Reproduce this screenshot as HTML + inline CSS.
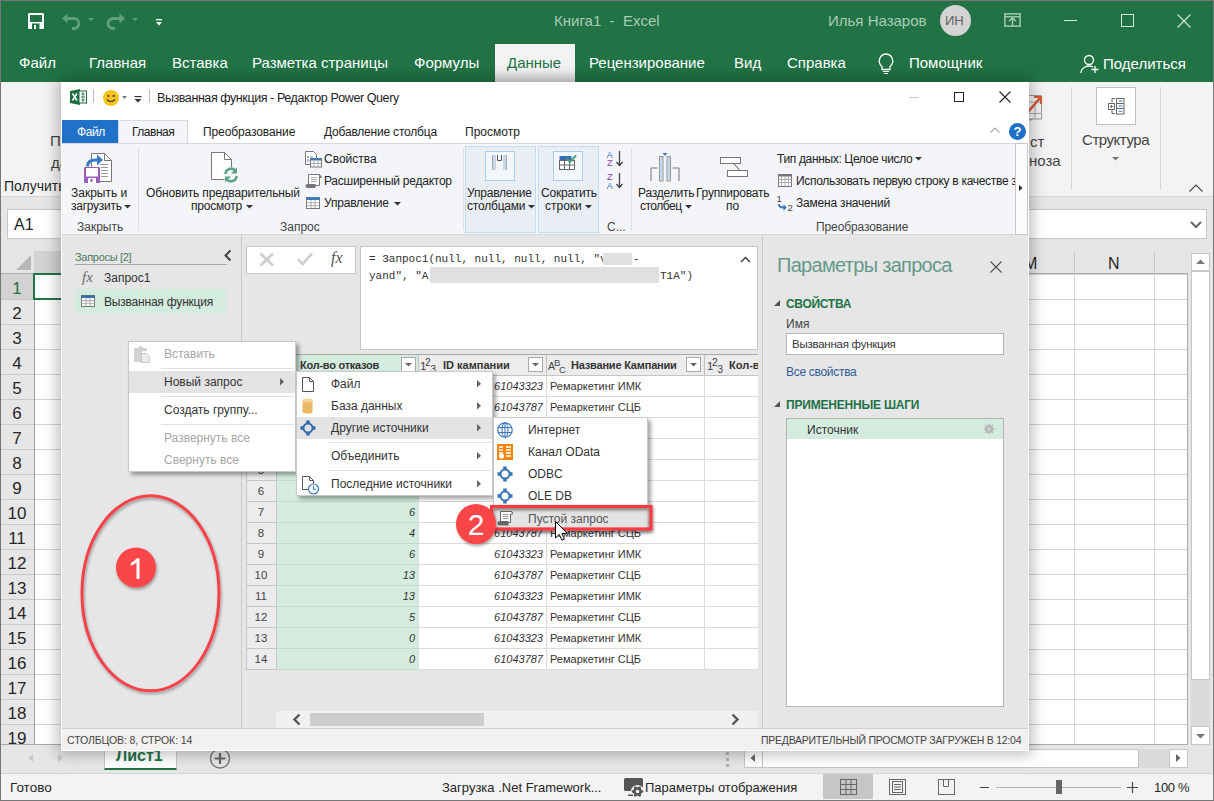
<!DOCTYPE html>
<html><head><meta charset="utf-8">
<style>
*{margin:0;padding:0;box-sizing:border-box}
html,body{width:1214px;height:801px;overflow:hidden;background:#fff}
body{position:relative;font-family:"Liberation Sans",sans-serif;color:#262626}
.a{position:absolute}
.t{position:absolute;white-space:nowrap;line-height:1}
svg{position:absolute;overflow:visible}
</style></head><body>

<!-- ============ EXCEL BACKGROUND ============ -->
<div class="a" style="left:0;top:0;width:1214px;height:82px;background:#217346"></div>
<!-- QAT -->
<svg style="left:28px;top:13px" width="17" height="17" viewBox="0 0 17 17"><rect x="0" y="0" width="16" height="16" rx="1.2" fill="#fff"/><rect x="2" y="2" width="12" height="7" fill="#217346"/><rect x="4" y="10.5" width="7.5" height="5.5" fill="#217346"/><rect x="6" y="12" width="2" height="4" fill="#fff"/></svg>
<svg style="left:62px;top:13px" width="20" height="17" viewBox="0 0 20 17"><path d="M4 5.5h8a5 5 0 0 1 0 10h-2" fill="none" stroke="#5f9f7c" stroke-width="2.8"/><path d="M0 5.5l5.5-5v10z" fill="#5f9f7c"/></svg>
<svg style="left:88px;top:18px" width="7" height="4"><path d="M0 0h6l-3 3z" fill="#5f9f7c"/></svg>
<svg style="left:105px;top:13px" width="20" height="17" viewBox="0 0 20 17"><path d="M16 5.5h-8a5 5 0 0 0 0 10h2" fill="none" stroke="#5f9f7c" stroke-width="2.8"/><path d="M20 5.5l-5.5-5v10z" fill="#5f9f7c"/></svg>
<svg style="left:132px;top:18px" width="7" height="4"><path d="M0 0h6l-3 3z" fill="#5f9f7c"/></svg>
<svg style="left:156px;top:19px" width="7" height="8"><rect x="0" y="0" width="6" height="1.3" fill="#fff"/><path d="M0 3h6l-3 3.5z" fill="#fff"/></svg>
<div class="t" style="left:554px;top:13px;font-size:15px;color:#a9cbb8">Книга1&nbsp; - &nbsp;Excel</div>
<div class="t" style="left:828px;top:13px;font-size:15px;color:#a9cbb8">Илья Назаров</div>
<div class="a" style="left:940px;top:5px;width:31px;height:31px;border-radius:50%;background:#d4d4d4"></div>
<div class="t" style="left:945px;top:14px;font-size:13px;color:#606060">ИН</div>
<svg style="left:1004px;top:13px" width="17" height="14" viewBox="0 0 17 14"><rect x="0.9" y="0.9" width="15.2" height="12.2" fill="none" stroke="#a6cdb5" stroke-width="1.5"/><path d="M1 3.8h15" stroke="#a6cdb5" stroke-width="1.4"/><path d="M8.5 13v-8.5M5 8.2l3.5-3.5 3.5 3.5" fill="none" stroke="#a6cdb5" stroke-width="1.4"/></svg>
<div class="a" style="left:1064px;top:20px;width:13px;height:1px;background:#d9e8df"></div>
<div class="a" style="left:1121px;top:14px;width:13px;height:13px;border:1px solid #d9e8df"></div>
<svg style="left:1177px;top:14px" width="14" height="14"><path d="M0.5 0.5l13 13M13.5 0.5l-13 13" stroke="#d9e8df" stroke-width="1.1"/></svg>

<!-- Tabs -->
<div class="t" style="left:19px;top:55px;font-size:15px;color:#fff">Файл</div>
<div class="t" style="left:89px;top:55px;font-size:15px;color:#fff">Главная</div>
<div class="t" style="left:172px;top:55px;font-size:15px;color:#fff">Вставка</div>
<div class="t" style="left:252px;top:55px;font-size:15px;color:#fff">Разметка страницы</div>
<div class="t" style="left:414px;top:55px;font-size:15px;color:#fff">Формулы</div>
<div class="a" style="left:495px;top:44px;width:80px;height:38px;background:linear-gradient(#f3f3f3 70%,#dcdcdc)"></div>
<div class="t" style="left:507px;top:55px;font-size:15px;color:#217346">Данные</div>
<div class="t" style="left:589px;top:55px;font-size:15px;color:#fff">Рецензирование</div>
<div class="t" style="left:734px;top:55px;font-size:15px;color:#fff">Вид</div>
<div class="t" style="left:787px;top:55px;font-size:15px;color:#fff">Справка</div>
<svg style="left:877px;top:53px" width="18" height="21" viewBox="0 0 18 21"><path d="M9 1a7 7 0 0 0-4 12.5v3h8v-3A7 7 0 0 0 9 1z" fill="none" stroke="#fff" stroke-width="1.3"/><path d="M6 18.5h6M7 20.5h4" stroke="#fff" stroke-width="1.2"/></svg>
<div class="t" style="left:909px;top:55px;font-size:15px;color:#fff">Помощник</div>
<svg style="left:1080px;top:54px" width="20" height="20" viewBox="0 0 20 20"><circle cx="9" cy="6" r="4.5" fill="none" stroke="#fff" stroke-width="1.3"/><path d="M1 19a8 7 0 0 1 12-6" fill="none" stroke="#fff" stroke-width="1.3"/><path d="M15 12v7M11.5 15.5h7" stroke="#fff" stroke-width="1.3"/></svg>
<div class="t" style="left:1103px;top:56px;font-size:15px;color:#fff">Поделиться</div>

<!-- Excel ribbon -->
<div class="a" style="left:0;top:82px;width:1214px;height:115px;background:#f3f3f3;border-bottom:1px solid #d5d5d5"></div>
<div class="t" style="left:50px;top:133px;font-size:15px;color:#444">П</div>
<div class="t" style="left:51px;top:155px;font-size:15px;color:#444">да</div>
<div class="t" style="left:4px;top:179px;font-size:14px;color:#262626">Получить</div>
<!-- right side of excel ribbon -->
<svg style="left:1028px;top:94px" width="16" height="30" viewBox="0 0 16 30"><path d="M-8 1.5h21.5v23.5h-21.5" fill="none" stroke="#999" stroke-width="1"/><path d="M-8 8h21.5M-8 19.5h21.5M7 8v17" stroke="#aaa" stroke-width="1"/><path d="M2 27l3-2h-4z" fill="#999"/><path d="M0 18l12-14" stroke="#d45a35" stroke-width="2.6"/><path d="M6 3h7v7" fill="none" stroke="#d45a35" stroke-width="2.2"/></svg>
<div class="t" style="left:1030px;top:134px;font-size:15px;color:#444">ст</div>
<div class="t" style="left:1029px;top:153px;font-size:15px;color:#444">ноза</div>
<div class="a" style="left:1071px;top:87px;width:1px;height:103px;background:#d4d4d4"></div>
<div class="a" style="left:1096px;top:87px;width:40px;height:38px;border:1px solid #c0c0c0;background:#fff"></div>
<svg style="left:1108px;top:98px" width="17" height="17" viewBox="0 0 17 17"><rect x="0.5" y="5.5" width="6" height="6" fill="none" stroke="#666"/><path d="M3.5 7v3M2 8.5h3" stroke="#666"/><path d="M7 0.5h-3v4M4 12v3.5h3" fill="none" stroke="#666"/><rect x="8.5" y="0.5" width="7.5" height="15.5" fill="none" stroke="#666"/><path d="M8.5 5.5h7.5M8.5 10.5h7.5" stroke="#666"/><path d="M10.5 3h4M10.5 8h4M10.5 13.2h4" stroke="#3f7fc0" stroke-width="1.1"/></svg>
<div class="t" style="left:1082px;top:132px;font-size:15px;color:#444;letter-spacing:-0.45px">Структура</div>
<svg style="left:1112px;top:157px" width="8" height="5"><path d="M0 0h7l-3.5 3.5z" fill="#777"/></svg>
<div class="a" style="left:1160px;top:87px;width:1px;height:103px;background:#d4d4d4"></div>
<svg style="left:1189px;top:184px" width="14" height="8"><path d="M0.5 7.5l6.5-6.5 6.5 6.5" fill="none" stroke="#444" stroke-width="1.1"/></svg>

<!-- formula bar -->
<div class="a" style="left:0;top:197px;width:1214px;height:54px;background:#e6e6e6"></div>
<div class="a" style="left:7px;top:209px;width:1200px;height:30px;background:#fff;border:1px solid #c6c6c6"></div>
<div class="t" style="left:14px;top:217px;font-size:16px;color:#262626">A1</div>
<svg style="left:1190px;top:221px" width="12" height="8"><path d="M1 1l5 5 5-5" fill="none" stroke="#666" stroke-width="2"/></svg>

<!-- grid -->
<div class="a" style="left:0;top:251px;width:1214px;height:550px;background:#e6e6e6"></div>
<div id="grid" class="a" style="left:34px;top:274px;width:1154px;height:470px;background-color:#fff;background-image:linear-gradient(#d4d4d4 1px,transparent 1px),linear-gradient(90deg,#d4d4d4 1px,transparent 1px);background-size:80px 25px,80px 25px;background-position:0 0,0 0;border-right:1px solid #ababab"></div>
<div class="a" style="left:0;top:273px;width:1188px;height:1px;background:#ababab"></div>
<div class="a" style="left:34px;top:251px;width:1px;height:493px;background:#9e9e9e"></div>
<div class="a" style="left:0;top:744px;width:1188px;height:1px;background:#ababab"></div>
<svg style="left:15px;top:255px" width="17" height="16"><path d="M16 0v15h-15z" fill="#b8b8b8"/></svg>
<div class="a" style="left:0;top:274px;width:34px;height:25px;background:#d2d2d2"></div>
<div class="a" style="left:34px;top:251px;width:80px;height:22px;background:#d2d2d2"></div>
<div class="a" style="left:0;top:299px;width:34px;height:1px;background:#c8c8c8"></div>
<div class="t" style="left:0;top:280px;width:34px;text-align:center;font-size:17px;color:#217346">1</div>
<div class="a" style="left:0;top:324px;width:34px;height:1px;background:#c8c8c8"></div>
<div class="t" style="left:0;top:305px;width:34px;text-align:center;font-size:17px;color:#262626">2</div>
<div class="a" style="left:0;top:349px;width:34px;height:1px;background:#c8c8c8"></div>
<div class="t" style="left:0;top:330px;width:34px;text-align:center;font-size:17px;color:#262626">3</div>
<div class="a" style="left:0;top:374px;width:34px;height:1px;background:#c8c8c8"></div>
<div class="t" style="left:0;top:355px;width:34px;text-align:center;font-size:17px;color:#262626">4</div>
<div class="a" style="left:0;top:399px;width:34px;height:1px;background:#c8c8c8"></div>
<div class="t" style="left:0;top:380px;width:34px;text-align:center;font-size:17px;color:#262626">5</div>
<div class="a" style="left:0;top:424px;width:34px;height:1px;background:#c8c8c8"></div>
<div class="t" style="left:0;top:405px;width:34px;text-align:center;font-size:17px;color:#262626">6</div>
<div class="a" style="left:0;top:449px;width:34px;height:1px;background:#c8c8c8"></div>
<div class="t" style="left:0;top:430px;width:34px;text-align:center;font-size:17px;color:#262626">7</div>
<div class="a" style="left:0;top:474px;width:34px;height:1px;background:#c8c8c8"></div>
<div class="t" style="left:0;top:455px;width:34px;text-align:center;font-size:17px;color:#262626">8</div>
<div class="a" style="left:0;top:499px;width:34px;height:1px;background:#c8c8c8"></div>
<div class="t" style="left:0;top:480px;width:34px;text-align:center;font-size:17px;color:#262626">9</div>
<div class="a" style="left:0;top:524px;width:34px;height:1px;background:#c8c8c8"></div>
<div class="t" style="left:0;top:505px;width:34px;text-align:center;font-size:17px;color:#262626">10</div>
<div class="a" style="left:0;top:549px;width:34px;height:1px;background:#c8c8c8"></div>
<div class="t" style="left:0;top:530px;width:34px;text-align:center;font-size:17px;color:#262626">11</div>
<div class="a" style="left:0;top:574px;width:34px;height:1px;background:#c8c8c8"></div>
<div class="t" style="left:0;top:555px;width:34px;text-align:center;font-size:17px;color:#262626">12</div>
<div class="a" style="left:0;top:599px;width:34px;height:1px;background:#c8c8c8"></div>
<div class="t" style="left:0;top:580px;width:34px;text-align:center;font-size:17px;color:#262626">13</div>
<div class="a" style="left:0;top:624px;width:34px;height:1px;background:#c8c8c8"></div>
<div class="t" style="left:0;top:605px;width:34px;text-align:center;font-size:17px;color:#262626">14</div>
<div class="a" style="left:0;top:649px;width:34px;height:1px;background:#c8c8c8"></div>
<div class="t" style="left:0;top:630px;width:34px;text-align:center;font-size:17px;color:#262626">15</div>
<div class="a" style="left:0;top:674px;width:34px;height:1px;background:#c8c8c8"></div>
<div class="t" style="left:0;top:655px;width:34px;text-align:center;font-size:17px;color:#262626">16</div>
<div class="a" style="left:0;top:699px;width:34px;height:1px;background:#c8c8c8"></div>
<div class="t" style="left:0;top:680px;width:34px;text-align:center;font-size:17px;color:#262626">17</div>
<div class="a" style="left:0;top:724px;width:34px;height:1px;background:#c8c8c8"></div>
<div class="t" style="left:0;top:705px;width:34px;text-align:center;font-size:17px;color:#262626">18</div>
<div class="a" style="left:0;top:749px;width:34px;height:1px;background:#c8c8c8"></div>
<div class="t" style="left:0;top:730px;width:34px;text-align:center;font-size:17px;color:#262626">19</div>
<div class="t" style="left:1024px;top:256px;font-size:16px;color:#262626">M</div>
<div class="t" style="left:1108px;top:256px;font-size:16px;color:#262626">N</div>
<div class="a" style="left:1074px;top:251px;width:1px;height:23px;background:#c6c6c6"></div>
<div class="a" style="left:1154px;top:251px;width:1px;height:23px;background:#c6c6c6"></div>
<div class="a" style="left:33px;top:273px;width:30px;height:27px;border:2px solid #217346"></div>
<!-- vertical scrollbar -->
<div class="a" style="left:1191px;top:253px;width:19px;height:492px;background:#dadada"></div>
<div class="a" style="left:1191px;top:253px;width:19px;height:18px;background:#fff;border:1px solid #c6c6c6"></div>
<svg style="left:1196px;top:259px" width="10" height="6"><path d="M0 5h9l-4.5-4.5z" fill="#777"/></svg>
<div class="a" style="left:1191px;top:271px;width:19px;height:409px;background:#fff;border:1px solid #c6c6c6"></div>
<div class="a" style="left:1191px;top:726px;width:19px;height:19px;background:#fff;border:1px solid #c6c6c6"></div>
<svg style="left:1196px;top:734px" width="10" height="6"><path d="M0 0h9l-4.5 4.5z" fill="#777"/></svg>

<!-- sheet tabs row -->
<div class="a" style="left:0;top:745px;width:1214px;height:28px;background:#e6e6e6"></div>
<svg style="left:28px;top:754px" width="6" height="9"><path d="M5 0v8l-4.5-4z" fill="#c6c6c6"/></svg>
<svg style="left:58px;top:754px" width="6" height="9"><path d="M0 0v8l4.5-4z" fill="#c6c6c6"/></svg>
<div class="a" style="left:104px;top:745px;width:73px;height:25px;background:#fff;border:1px solid #c6c6c6;border-top:none;border-bottom:2px solid #217346"></div>
<div class="t" style="left:116px;top:748px;font-size:16px;font-weight:bold;color:#217346">Лист1</div>
<svg style="left:209px;top:748px" width="22" height="22"><circle cx="11" cy="10.5" r="9.5" fill="none" stroke="#777" stroke-width="1.4"/><path d="M11 5v11M5.5 10.5h11" stroke="#666" stroke-width="2.2"/></svg>
<svg style="left:726px;top:752px" width="3" height="15"><rect x="0" y="0" width="3" height="3" fill="#b4b4b4"/><rect x="0" y="6" width="3" height="3" fill="#b4b4b4"/><rect x="0" y="12" width="3" height="3" fill="#b4b4b4"/></svg>
<div class="a" style="left:744px;top:749px;width:444px;height:19px;background:#dadada"></div>
<div class="a" style="left:744px;top:749px;width:19px;height:19px;background:#fff;border:1px solid #c6c6c6"></div>
<svg style="left:750px;top:754px" width="6" height="9"><path d="M5 0v8l-4.5-4z" fill="#666"/></svg>
<div class="a" style="left:762px;top:749px;width:377px;height:19px;background:#fff;border:1px solid #c6c6c6"></div>
<div class="a" style="left:1169px;top:749px;width:19px;height:19px;background:#fff;border:1px solid #c6c6c6"></div>
<svg style="left:1176px;top:754px" width="6" height="9"><path d="M0 0v8l4.5-4z" fill="#666"/></svg>

<!-- status bar -->
<div class="a" style="left:0;top:773px;width:1214px;height:28px;background:#f3f3f3;border-top:1px solid #d5d5d5"></div>
<div class="t" style="left:10px;top:781px;font-size:13.5px;color:#262626">Готово</div>
<div class="t" style="left:442px;top:781px;font-size:13px;color:#262626">Загрузка .Net Framework...</div>
<svg style="left:624px;top:778px" width="20" height="20" viewBox="0 0 20 20"><rect x="0" y="0" width="19" height="13" rx="1.5" fill="#555"/><circle cx="13.5" cy="13.5" r="6.6" fill="#f3f3f3"/><rect x="4" y="16.5" width="5" height="1.5" fill="#555"/><path d="M19.25 12.75 L19.25 14.26 L17.47 15.15 L16.91 16.12 L17.03 18.10 L15.71 18.86 L14.06 17.76 L12.93 17.76 L11.28 18.86 L9.97 18.10 L10.09 16.11 L9.53 15.14 L7.75 14.25 L7.75 12.74 L9.53 11.85 L10.09 10.88 L9.97 8.90 L11.29 8.14 L12.94 9.24 L14.07 9.24 L15.72 8.14 L17.03 8.90 L16.91 10.89 L17.47 11.86z" fill="#555"/><circle cx="13.5" cy="13.5" r="1.8" fill="#f3f3f3"/></svg>
<div class="t" style="left:645px;top:781px;font-size:13px;color:#262626">Параметры отображения</div>
<div class="a" style="left:823px;top:774px;width:50px;height:25px;background:#c6c6c6"></div>
<svg style="left:840px;top:779px" width="17" height="16"><rect x="0.5" y="0.5" width="16" height="15" fill="none" stroke="#666"/><path d="M6 0.5v15M11 0.5v15M0.5 5.5h16M0.5 10.5h16" stroke="#666"/></svg>
<svg style="left:889px;top:779px" width="17" height="16"><rect x="0.5" y="0.5" width="16" height="15" fill="none" stroke="#666"/><rect x="3.5" y="2.5" width="10" height="11" fill="none" stroke="#666"/><path d="M5 5.5h7M5 8h7M5 10.5h7" stroke="#666"/></svg>
<svg style="left:938px;top:779px" width="17" height="16"><rect x="0.5" y="0.5" width="16" height="15" fill="none" stroke="#666"/><path d="M5.5 0.5v7h5v-7" fill="none" stroke="#666"/></svg>
<div class="a" style="left:980px;top:787px;width:9px;height:1px;background:#444"></div>
<div class="a" style="left:996px;top:787px;width:125px;height:1px;background:#b4b4b4"></div>
<div class="a" style="left:1056px;top:780px;width:6px;height:14px;background:#666"></div>
<svg style="left:1127px;top:782px" width="11" height="11"><path d="M5.5 0v11M0 5.5h11" stroke="#444" stroke-width="1.2"/></svg>
<div class="t" style="left:1154px;top:781px;font-size:13px;color:#262626;letter-spacing:-0.3px">100 %</div>
<div class="a" style="left:0;top:0;width:1214px;height:801px;border:1px solid #767676;pointer-events:none;z-index:50"></div>

<!-- ============ POWER QUERY WINDOW ============ -->
<div id="pq" class="a" style="left:61px;top:82px;width:968px;height:669px;background:#e6e6e6;border:1px solid #fff;box-shadow:0 0 14px 3px rgba(0,0,0,0.28)"></div>
<!-- PQ title bar -->
<div class="a" style="left:61px;top:82px;width:968px;height:61px;background:#fff"></div>
<svg style="left:70px;top:89px" width="17" height="16" viewBox="0 0 17 16"><path d="M0 2l10-2v16l-10-2z" fill="#1d6f42"/><rect x="9" y="2" width="7.5" height="12" fill="#fff" stroke="#1d6f42" stroke-width="1"/><path d="M11 5h4M11 8h4M11 11h4M13 3v10" stroke="#1d6f42" stroke-width="0.8"/><path d="M2.5 4.5l4.5 7M7 4.5l-4.5 7" stroke="#fff" stroke-width="1.5"/></svg>
<div class="a" style="left:93px;top:89px;width:1px;height:14px;background:#bdbdbd"></div>
<svg style="left:103px;top:90px" width="17" height="17" viewBox="0 0 17 17"><circle cx="8" cy="8" r="8" fill="#f7c31a"/><circle cx="5.3" cy="6" r="1.1" fill="#333"/><circle cx="10.7" cy="6" r="1.1" fill="#333"/><path d="M4 9.5q4 4 8 0" fill="none" stroke="#333" stroke-width="1.1"/></svg>
<svg style="left:122px;top:96px" width="5" height="3"><path d="M0 0h5l-2.5 3z" fill="#777"/></svg>
<svg style="left:134px;top:96px" width="8" height="7"><rect x="0.5" y="0" width="7" height="1.2" fill="#333"/><path d="M0.5 3h7l-3.5 3.5z" fill="#333"/></svg>
<div class="a" style="left:149px;top:89px;width:1px;height:14px;background:#bdbdbd"></div>
<div class="t" style="left:157px;top:92px;font-size:12.5px;letter-spacing:-0.42px;color:#222">Вызванная функция - Редактор Power Query</div>
<div class="a" style="left:909px;top:97px;width:10px;height:1px;background:#c8c8c8"></div>
<div class="a" style="left:954px;top:92px;width:10px;height:10px;border:1px solid #222"></div>
<svg style="left:999px;top:91px" width="12" height="12"><path d="M0.5 0.5l11 11M11.5 0.5l-11 11" stroke="#222" stroke-width="1.1"/></svg>
<!-- PQ tabs -->
<div class="a" style="left:62px;top:120px;width:56px;height:23px;background:#2072c8"></div>
<div class="t" style="left:77px;top:126px;font-size:12px;letter-spacing:-0.45px;color:#fff">Файл</div>
<div class="a" style="left:118px;top:120px;width:70px;height:24px;background:#f3f5f8;border:1px solid #d5d9de;border-bottom:none"></div>
<div class="t" style="left:132px;top:126px;font-size:12px;letter-spacing:-0.5px;color:#222">Главная</div>
<div class="t" style="left:203px;top:126px;font-size:12px;color:#222;letter-spacing:-0.1px">Преобразование</div>
<div class="t" style="left:324px;top:126px;font-size:12px;color:#222;letter-spacing:-0.2px">Добавление столбца</div>
<div class="t" style="left:465px;top:126px;font-size:12px;color:#222">Просмотр</div>
<svg style="left:990px;top:127px" width="10" height="6"><path d="M0.5 5.5l4.5-4.5 4.5 4.5" fill="none" stroke="#aaa" stroke-width="1.1"/></svg>
<div class="a" style="left:1009px;top:123px;width:17px;height:17px;border-radius:50%;background:#1e6fc6"></div>
<div class="t" style="left:1009px;top:125px;width:17px;text-align:center;font-size:13px;font-weight:bold;color:#fff">?</div>
<!-- PQ ribbon -->
<div class="a" style="left:62px;top:143px;width:966px;height:92px;background:#f3f5f8;border-top:1px solid #d5d9de;border-bottom:1px solid #d8d8d8"></div>
<!-- close & load -->
<svg style="left:84px;top:153px" width="28" height="30" viewBox="0 0 28 30"><path d="M7.5 0.5h13l7 7v21h-20z" fill="#fff" stroke="#777" stroke-width="1"/><path d="M20.5 0.5v7h7" fill="none" stroke="#777" stroke-width="1"/><path d="M16 11.5h8M17 14.5h7M17 17.5h7M17 20.5h7M17 23.5h7" stroke="#999" stroke-width="1"/><rect x="0" y="14" width="16" height="16" rx="1" fill="#9a5db8"/><rect x="2" y="15" width="12" height="8.5" fill="#fff"/><rect x="4" y="25" width="8" height="5" fill="#fff"/><rect x="6.5" y="26" width="2" height="3" fill="#9a5db8"/><path d="M3.5 13.5q0-6.5 8-6.5h2.5" fill="none" stroke="#3a7cc0" stroke-width="3"/><path d="M13 1.5l6 5.5-6 5.5z" fill="#3a7cc0"/></svg>
<div class="t" style="left:71px;top:187px;font-size:12px;color:#222">Закрыть и</div>
<div class="t" style="left:71px;top:200px;font-size:12px;color:#222;letter-spacing:-0.25px">загрузить</div>
<svg style="left:124px;top:205px" width="7" height="4"><path d="M0 0h7l-3.5 3.5z" fill="#333"/></svg>
<div class="t" style="left:77px;top:221px;font-size:12px;color:#444">Закрыть</div>
<div class="a" style="left:138px;top:148px;width:1px;height:82px;background:#dcdfe3"></div>
<!-- refresh -->
<svg style="left:211px;top:152px" width="28" height="32" viewBox="0 0 28 32"><path d="M0.5 0.5h13l7 7v20h-20z" fill="#fff" stroke="#777" stroke-width="1"/><path d="M13.5 0.5v7h7" fill="none" stroke="#777" stroke-width="1"/><circle cx="20" cy="23" r="8" fill="#f3f5f8"/><path d="M14.5 22a5.5 5.5 0 0 1 10-3" fill="none" stroke="#5ea38a" stroke-width="2.6"/><path d="M26 15.5v6h-6z" fill="#5ea38a"/><path d="M25.5 24a5.5 5.5 0 0 1-10 3" fill="none" stroke="#5ea38a" stroke-width="2.6"/><path d="M14 30.5v-6h6z" fill="#5ea38a"/></svg>
<div class="t" style="left:146px;top:187px;font-size:12px;color:#222;letter-spacing:-0.15px">Обновить предварительный</div>
<div class="t" style="left:191px;top:200px;font-size:12px;color:#222;letter-spacing:-0.2px">просмотр</div>
<svg style="left:246px;top:205px" width="7" height="4"><path d="M0 0h7l-3.5 3.5z" fill="#333"/></svg>
<!-- properties -->
<svg style="left:305px;top:151px" width="17" height="17" viewBox="0 0 17 17"><path d="M0.5 0.5h8l3 3v10h-11z" fill="#fff" stroke="#777"/><circle cx="3" cy="6" r="1" fill="#888"/><circle cx="3" cy="9.5" r="1" fill="none" stroke="#888" stroke-width="0.8"/><path d="M5 6h3" stroke="#888"/><rect x="5.5" y="7.5" width="11" height="8.5" fill="#fff" stroke="#777"/><rect x="5.5" y="7.5" width="11" height="2" fill="#3a7cc0"/><path d="M9 9.5v6.5M13 9.5v6.5M5.5 12.5h11" stroke="#999" stroke-width="0.8"/></svg>
<div class="t" style="left:324px;top:153px;font-size:12px;color:#222">Свойства</div>
<svg style="left:305px;top:174px" width="17" height="15" viewBox="0 0 17 15"><path d="M3.5 0.5h11v11h-11z" fill="#fff" stroke="#777"/><path d="M14.5 0.5l2 1.5v2h-2" fill="#777"/><path d="M6 3.5h6M6 5.5h6M6 7.5h6" stroke="#999" stroke-width="0.8"/><path d="M0.5 12q0-2 2-2h8v4h-8q-2 0-2-2z" fill="#777"/></svg>
<div class="t" style="left:324px;top:175px;font-size:12px;color:#222;letter-spacing:-0.25px">Расширенный редактор</div>
<svg style="left:306px;top:197px" width="14" height="12" viewBox="0 0 14 12"><rect x="0.5" y="0.5" width="13" height="11" fill="#fff" stroke="#777"/><rect x="0.5" y="0.5" width="13" height="2.5" fill="#3a7cc0"/><path d="M5 3v8.5M9 3v8.5M0.5 5.8h13M0.5 8.7h13" stroke="#999" stroke-width="0.8"/></svg>
<div class="t" style="left:324px;top:197px;font-size:12px;color:#222;letter-spacing:-0.2px">Управление</div>
<svg style="left:394px;top:202px" width="7" height="4"><path d="M0 0h7l-3.5 3.5z" fill="#333"/></svg>
<div class="t" style="left:280px;top:221px;font-size:12px;color:#444">Запрос</div>
<div class="a" style="left:463px;top:148px;width:1px;height:82px;background:#dcdfe3"></div>
<!-- manage columns -->
<div class="a" style="left:465px;top:146px;width:71px;height:87px;background:#e9eef5;border:1px solid #c3dcf3"></div>
<div class="a" style="left:485px;top:151px;width:30px;height:30px;border:1px solid #a8cdf0;background:#f3f6fa"></div>
<svg style="left:492px;top:155px" width="16" height="16" viewBox="0 0 16 16"><rect x="0" y="0" width="4" height="15" fill="#c6d8ea"/><rect x="0" y="0" width="1" height="15" fill="#aaa"/><rect x="11" y="0" width="4" height="15" fill="#c6d8ea"/><rect x="14" y="0" width="1" height="15" fill="#aaa"/><path d="M5.5 0v5.5h4v-5.5" fill="none" stroke="#555" stroke-width="1"/></svg>
<div class="t" style="left:467px;top:187px;font-size:12px;color:#222;letter-spacing:-0.2px">Управление</div>
<div class="t" style="left:467px;top:200px;font-size:12px;color:#222;letter-spacing:-0.2px">столбцами</div>
<svg style="left:528px;top:205px" width="7" height="4"><path d="M0 0h7l-3.5 3.5z" fill="#333"/></svg>
<div class="a" style="left:538px;top:146px;width:61px;height:87px;background:#e9eef5;border:1px solid #c3dcf3"></div>
<div class="a" style="left:553px;top:151px;width:30px;height:30px;border:1px solid #a8cdf0;background:#f3f6fa"></div>
<svg style="left:559px;top:155px" width="18" height="16" viewBox="0 0 18 16"><rect x="0.5" y="1" width="12" height="4.5" fill="#3a6fb0"/><rect x="0.5" y="5.5" width="15" height="9" fill="#fff" stroke="#666" stroke-width="1"/><path d="M5.5 5.5v9M10.5 5.5v9M0.5 10h15" stroke="#666" stroke-width="1"/><path d="M8 4l3 3 6-6.5" fill="none" stroke="#4aa080" stroke-width="2"/></svg>
<div class="t" style="left:541px;top:187px;font-size:12px;color:#222;letter-spacing:-0.2px">Сократить</div>
<div class="t" style="left:545px;top:200px;font-size:12px;color:#222">строки</div>
<svg style="left:585px;top:205px" width="7" height="4"><path d="M0 0h7l-3.5 3.5z" fill="#333"/></svg>
<!-- sort -->
<svg style="left:606px;top:150px" width="17" height="40" viewBox="0 0 17 40"><text x="0.5" y="7.5" style="font-family:'Liberation Sans'" font-size="9.5" fill="#3a7cc0">A</text><text x="1" y="16" style="font-family:'Liberation Sans'" font-size="9.5" fill="#8e44ad">Z</text><path d="M13.5 1v14M10.5 12l3 3.5 3-3.5" fill="none" stroke="#444" stroke-width="1.3"/><text x="1" y="30" style="font-family:'Liberation Sans'" font-size="9.5" fill="#8e44ad">Z</text><text x="0.5" y="38.5" style="font-family:'Liberation Sans'" font-size="9.5" fill="#3a7cc0">A</text><path d="M13.5 23v14M10.5 34l3 3.5 3-3.5" fill="none" stroke="#444" stroke-width="1.3"/></svg>
<div class="t" style="left:607px;top:221px;font-size:12px;color:#444">С...</div>
<div class="a" style="left:631px;top:148px;width:1px;height:82px;background:#dcdfe3"></div>
<!-- split / group -->
<svg style="left:650px;top:152px" width="31" height="30" viewBox="0 0 31 30"><path d="M1 29v-13h6.5M29 29v-13h-6.5" fill="none" stroke="#777" stroke-width="1"/><rect x="9.5" y="4.5" width="3.5" height="24.5" fill="#c6d8ee" stroke="#999" stroke-width="1"/><rect x="17" y="4.5" width="3.5" height="24.5" fill="#c6d8ee" stroke="#999" stroke-width="1"/><path d="M12.5 1h5l-2.5 3z" fill="#3a7cc0"/></svg>
<div class="t" style="left:638px;top:187px;font-size:12px;color:#222;letter-spacing:-0.2px">Разделить</div>
<div class="t" style="left:640px;top:200px;font-size:12px;color:#222;letter-spacing:-0.5px">столбец</div>
<svg style="left:685px;top:205px" width="7" height="4"><path d="M0 0h7l-3.5 3.5z" fill="#333"/></svg>
<svg style="left:720px;top:157px" width="29" height="21" viewBox="0 0 29 21"><rect x="0.5" y="0.5" width="20" height="6" fill="#fff" stroke="#777"/><rect x="7.5" y="13.5" width="20" height="6" fill="#fff" stroke="#777"/><path d="M14 7l6 6.5" stroke="#555" stroke-width="1"/></svg>
<div class="t" style="left:696px;top:187px;font-size:12px;color:#222;letter-spacing:-0.2px">Группировать</div>
<div class="t" style="left:726px;top:200px;font-size:12px;color:#222">по</div>
<!-- data type -->
<div class="t" style="left:777px;top:153px;font-size:12px;color:#222;letter-spacing:-0.35px">Тип данных: Целое число</div>
<svg style="left:915px;top:157px" width="7" height="4"><path d="M0 0h7l-3.5 3.5z" fill="#333"/></svg>
<svg style="left:778px;top:174px" width="14" height="13" viewBox="0 0 14 13"><rect x="0.5" y="0.5" width="13" height="12" fill="#fff" stroke="#777"/><rect x="0.5" y="0.5" width="13" height="2" fill="#777"/><path d="M3.5 2.5v10M7 2.5v10M10.5 2.5v10M0.5 5.5h13M0.5 8.5h13" stroke="#999" stroke-width="0.8"/></svg>
<div class="a" style="left:796px;top:170px;width:219px;height:20px;overflow:hidden"><div class="t" style="left:0;top:5px;font-size:12px;color:#222;letter-spacing:-0.3px">Использовать первую строку в качестве заголовков</div></div>
<svg style="left:776px;top:193px" width="18" height="19" viewBox="0 0 18 19"><text x="0.5" y="9" style="font-family:'Liberation Sans'" font-size="9.5" fill="#444">1</text><path d="M2.5 11.2q1 3.3 4.5 3.3h2" fill="none" stroke="#3a73b8" stroke-width="1.8"/><path d="M7.5 11.3l3.2 3.2-3.2 3.2z" fill="#3a73b8"/><text x="11.5" y="18" style="font-family:'Liberation Sans'" font-size="9.5" fill="#444">2</text></svg>
<div class="t" style="left:796px;top:197px;font-size:12px;color:#222;letter-spacing:-0.2px">Замена значений</div>
<div class="t" style="left:816px;top:221px;font-size:12px;color:#444;letter-spacing:-0.1px">Преобразование</div>
<div class="a" style="left:1015px;top:143px;width:13px;height:92px;background:#fbfbfb;border:1px solid #c8c8c8"></div>
<svg style="left:1019px;top:185px" width="4" height="7"><path d="M0 0v6l3.5-3z" fill="#222"/></svg>
<!-- PQ body -->
<div class="a" style="left:241px;top:235px;width:1px;height:493px;background:#c8c8c8"></div>
<div class="t" style="left:75px;top:252px;font-size:11px;letter-spacing:-0.3px;color:#4a7a62">Запросы [2]</div>
<div class="a" style="left:75px;top:264px;width:152px;height:1px;background:#a8a8a8"></div>
<svg style="left:224px;top:250px" width="8" height="11"><path d="M6.5 0.5l-5 5 5 5" fill="none" stroke="#444" stroke-width="2"/></svg>
<div class="t" style="left:82px;top:270px;font-family:'Liberation Serif',serif;font-style:italic;font-size:15px;color:#666">fx</div>
<div class="t" style="left:104px;top:272px;font-size:12px;color:#333">Запрос1</div>
<div class="a" style="left:75px;top:289px;width:152px;height:24px;background:#d3ecdf"></div>
<svg style="left:81px;top:295px" width="14" height="12" viewBox="0 0 14 12"><rect x="0.5" y="0.5" width="13" height="11" fill="#fff" stroke="#777"/><rect x="0.5" y="0.5" width="13" height="2.5" fill="#3a6fb0"/><path d="M5 3v8.5M9 3v8.5M0.5 5.8h13M0.5 8.7h13" stroke="#999" stroke-width="0.8"/></svg>
<div class="t" style="left:104px;top:296px;font-size:12px;letter-spacing:-0.2px;color:#333">Вызванная функция</div>
<!-- formula -->
<div class="a" style="left:246px;top:246px;width:110px;height:28px;background:#fff;border:1px solid #c6c6c6"></div>
<svg style="left:259px;top:252px" width="16" height="15"><path d="M1.5 1.5l12.5 12M14 1.5l-12.5 12" stroke="#cdcdcd" stroke-width="2.6"/></svg>
<svg style="left:297px;top:252px" width="16" height="14"><path d="M1 7l4.5 5 9.5-10.5" fill="none" stroke="#cdcdcd" stroke-width="2.6"/></svg>
<div class="t" style="left:331px;top:250px;font-family:'Liberation Serif',serif;font-style:italic;font-size:16px;color:#555">fx</div>
<div class="a" style="left:360px;top:246px;width:398px;height:104px;background:#fff;border:1px solid #c6c6c6"></div>
<div class="t" style="left:369px;top:254px;font-family:'Liberation Mono',monospace;font-size:11px;color:#333">= Запрос1(null, null, null, null, "v&nbsp;&nbsp;&nbsp;&nbsp;-</div>
<div class="t" style="left:369px;top:271px;font-family:'Liberation Mono',monospace;font-size:11px;color:#333">yand", "A</div>
<div class="a" style="left:603px;top:253px;width:29px;height:12px;background:#e0e0e0;filter:blur(0.7px)"></div>
<div class="a" style="left:430px;top:267px;width:229px;height:16px;background:#e0e0e0;filter:blur(0.7px)"></div>
<div class="t" style="left:660px;top:271px;font-family:'Liberation Mono',monospace;font-size:11px;color:#333">T1A")</div>
<svg style="left:740px;top:256px" width="11" height="7"><path d="M1 6l4.5-4.5 4.5 4.5" fill="none" stroke="#444" stroke-width="1.5"/></svg>
<!-- grid -->
<div class="a" style="left:246px;top:354px;width:512px;height:1px;background:#a8a8a8"></div>
<div class="a" style="left:246px;top:355px;width:512px;height:21px;background:#ececec;border-bottom:1px solid #c4c4c4"></div>
<div class="a" style="left:276px;top:355px;width:142px;height:21px;background:#d3ecdf;border-bottom:1px solid #c4c4c4"></div>
<div class="t" style="left:300px;top:360px;font-size:11px;font-weight:bold;color:#333;letter-spacing:-0.25px">Кол-во отказов</div>
<div class="a" style="left:401px;top:357px;width:15px;height:15px;background:#fff;border:1px solid #a8a8a8"></div><svg style="left:405px;top:363px" width="8" height="4"><path d="M0 0h7l-3.5 3.5z" fill="#666"/></svg>
<svg style="left:420px;top:357px" width="18" height="17" viewBox="0 0 18 17"><text x="0" y="13" style="font-family:'Liberation Sans'" font-size="11.5" fill="#444">1</text><text x="5" y="8.5" style="font-family:'Liberation Sans'" font-size="10" fill="#444">2</text><text x="10.5" y="15.5" style="font-family:'Liberation Sans'" font-size="10" fill="#444">3</text></svg>
<div class="t" style="left:443px;top:360px;font-size:11px;font-weight:bold;color:#333">ID кампании</div>
<div class="a" style="left:528px;top:357px;width:15px;height:15px;background:#fff;border:1px solid #a8a8a8"></div><svg style="left:532px;top:363px" width="8" height="4"><path d="M0 0h7l-3.5 3.5z" fill="#666"/></svg>
<svg style="left:548px;top:357px" width="18" height="17" viewBox="0 0 18 17"><text x="0" y="13" style="font-family:'Liberation Sans'" font-size="10.5" fill="#444">A</text><text x="6" y="8.5" style="font-family:'Liberation Sans'" font-size="9.5" fill="#444">B</text><text x="11" y="15.5" style="font-family:'Liberation Sans'" font-size="9.5" fill="#444">C</text></svg>
<div class="t" style="left:571px;top:360px;font-size:11px;font-weight:bold;color:#333;letter-spacing:-0.2px">Название Кампании</div>
<div class="a" style="left:686px;top:357px;width:15px;height:15px;background:#fff;border:1px solid #a8a8a8"></div><svg style="left:690px;top:363px" width="8" height="4"><path d="M0 0h7l-3.5 3.5z" fill="#666"/></svg>
<svg style="left:707px;top:357px" width="18" height="17" viewBox="0 0 18 17"><text x="0" y="13" style="font-family:'Liberation Sans'" font-size="11.5" fill="#444">1</text><text x="5" y="8.5" style="font-family:'Liberation Sans'" font-size="10" fill="#444">2</text><text x="10.5" y="15.5" style="font-family:'Liberation Sans'" font-size="10" fill="#444">3</text></svg>
<div class="t" style="left:729px;top:360px;font-size:11px;font-weight:bold;color:#333">Кол-в</div>
<div class="a" style="left:418px;top:355px;width:1px;height:21px;background:#c4c4c4"></div>
<div class="a" style="left:546px;top:355px;width:1px;height:21px;background:#c4c4c4"></div>
<div class="a" style="left:704px;top:355px;width:1px;height:21px;background:#c4c4c4"></div>
<div class="a" style="left:758px;top:354px;width:5px;height:374px;background:#e6e6e6"></div>
<div class="a" style="left:246px;top:376px;width:30px;height:21px;background:#ececec;border-bottom:1px solid #c4c4c4;border-left:1px solid #c4c4c4"></div>
<div class="t" style="left:246px;top:381px;width:30px;text-align:center;font-size:11.5px;color:#444">1</div>
<div class="a" style="left:276px;top:376px;width:142px;height:21px;background:#d3ecdf;border-bottom:1px solid #c8d6cf;border-left:1px solid #c4c4c4"></div>
<div class="a" style="left:418px;top:376px;width:340px;height:21px;background:#fff;border-bottom:1px solid #dadada"></div>
<div class="a" style="left:418px;top:376px;width:1px;height:21px;background:#dadada"></div>
<div class="a" style="left:546px;top:376px;width:1px;height:21px;background:#dadada"></div>
<div class="a" style="left:704px;top:376px;width:1px;height:21px;background:#dadada"></div>
<div class="t" style="left:418px;top:381px;width:125px;text-align:right;font-size:11px;font-style:italic;color:#333">61043323</div>
<div class="t" style="left:550px;top:381px;font-size:11px;color:#333">Ремаркетинг ИМК</div>
<div class="a" style="left:246px;top:397px;width:30px;height:21px;background:#ececec;border-bottom:1px solid #c4c4c4;border-left:1px solid #c4c4c4"></div>
<div class="t" style="left:246px;top:402px;width:30px;text-align:center;font-size:11.5px;color:#444">2</div>
<div class="a" style="left:276px;top:397px;width:142px;height:21px;background:#d3ecdf;border-bottom:1px solid #c8d6cf;border-left:1px solid #c4c4c4"></div>
<div class="a" style="left:418px;top:397px;width:340px;height:21px;background:#fff;border-bottom:1px solid #dadada"></div>
<div class="a" style="left:418px;top:397px;width:1px;height:21px;background:#dadada"></div>
<div class="a" style="left:546px;top:397px;width:1px;height:21px;background:#dadada"></div>
<div class="a" style="left:704px;top:397px;width:1px;height:21px;background:#dadada"></div>
<div class="t" style="left:418px;top:402px;width:125px;text-align:right;font-size:11px;font-style:italic;color:#333">61043787</div>
<div class="t" style="left:550px;top:402px;font-size:11px;color:#333">Ремаркетинг СЦБ</div>
<div class="a" style="left:246px;top:418px;width:30px;height:21px;background:#ececec;border-bottom:1px solid #c4c4c4;border-left:1px solid #c4c4c4"></div>
<div class="t" style="left:246px;top:423px;width:30px;text-align:center;font-size:11.5px;color:#444">3</div>
<div class="a" style="left:276px;top:418px;width:142px;height:21px;background:#d3ecdf;border-bottom:1px solid #c8d6cf;border-left:1px solid #c4c4c4"></div>
<div class="a" style="left:418px;top:418px;width:340px;height:21px;background:#fff;border-bottom:1px solid #dadada"></div>
<div class="a" style="left:418px;top:418px;width:1px;height:21px;background:#dadada"></div>
<div class="a" style="left:546px;top:418px;width:1px;height:21px;background:#dadada"></div>
<div class="a" style="left:704px;top:418px;width:1px;height:21px;background:#dadada"></div>
<div class="t" style="left:418px;top:423px;width:125px;text-align:right;font-size:11px;font-style:italic;color:#333">61043323</div>
<div class="t" style="left:550px;top:423px;font-size:11px;color:#333">Ремаркетинг ИМК</div>
<div class="a" style="left:246px;top:439px;width:30px;height:21px;background:#ececec;border-bottom:1px solid #c4c4c4;border-left:1px solid #c4c4c4"></div>
<div class="t" style="left:246px;top:444px;width:30px;text-align:center;font-size:11.5px;color:#444">4</div>
<div class="a" style="left:276px;top:439px;width:142px;height:21px;background:#d3ecdf;border-bottom:1px solid #c8d6cf;border-left:1px solid #c4c4c4"></div>
<div class="a" style="left:418px;top:439px;width:340px;height:21px;background:#fff;border-bottom:1px solid #dadada"></div>
<div class="a" style="left:418px;top:439px;width:1px;height:21px;background:#dadada"></div>
<div class="a" style="left:546px;top:439px;width:1px;height:21px;background:#dadada"></div>
<div class="a" style="left:704px;top:439px;width:1px;height:21px;background:#dadada"></div>
<div class="t" style="left:418px;top:444px;width:125px;text-align:right;font-size:11px;font-style:italic;color:#333">61043787</div>
<div class="t" style="left:550px;top:444px;font-size:11px;color:#333">Ремаркетинг СЦБ</div>
<div class="a" style="left:246px;top:460px;width:30px;height:21px;background:#ececec;border-bottom:1px solid #c4c4c4;border-left:1px solid #c4c4c4"></div>
<div class="t" style="left:246px;top:465px;width:30px;text-align:center;font-size:11.5px;color:#444">5</div>
<div class="a" style="left:276px;top:460px;width:142px;height:21px;background:#d3ecdf;border-bottom:1px solid #c8d6cf;border-left:1px solid #c4c4c4"></div>
<div class="a" style="left:418px;top:460px;width:340px;height:21px;background:#fff;border-bottom:1px solid #dadada"></div>
<div class="a" style="left:418px;top:460px;width:1px;height:21px;background:#dadada"></div>
<div class="a" style="left:546px;top:460px;width:1px;height:21px;background:#dadada"></div>
<div class="a" style="left:704px;top:460px;width:1px;height:21px;background:#dadada"></div>
<div class="t" style="left:418px;top:465px;width:125px;text-align:right;font-size:11px;font-style:italic;color:#333">61043323</div>
<div class="t" style="left:550px;top:465px;font-size:11px;color:#333">Ремаркетинг ИМК</div>
<div class="a" style="left:246px;top:481px;width:30px;height:21px;background:#ececec;border-bottom:1px solid #c4c4c4;border-left:1px solid #c4c4c4"></div>
<div class="t" style="left:246px;top:486px;width:30px;text-align:center;font-size:11.5px;color:#444">6</div>
<div class="a" style="left:276px;top:481px;width:142px;height:21px;background:#d3ecdf;border-bottom:1px solid #c8d6cf;border-left:1px solid #c4c4c4"></div>
<div class="a" style="left:418px;top:481px;width:340px;height:21px;background:#fff;border-bottom:1px solid #dadada"></div>
<div class="a" style="left:418px;top:481px;width:1px;height:21px;background:#dadada"></div>
<div class="a" style="left:546px;top:481px;width:1px;height:21px;background:#dadada"></div>
<div class="a" style="left:704px;top:481px;width:1px;height:21px;background:#dadada"></div>
<div class="t" style="left:418px;top:486px;width:125px;text-align:right;font-size:11px;font-style:italic;color:#333">61043787</div>
<div class="t" style="left:550px;top:486px;font-size:11px;color:#333">Ремаркетинг СЦБ</div>
<div class="a" style="left:246px;top:502px;width:30px;height:21px;background:#ececec;border-bottom:1px solid #c4c4c4;border-left:1px solid #c4c4c4"></div>
<div class="t" style="left:246px;top:507px;width:30px;text-align:center;font-size:11.5px;color:#444">7</div>
<div class="a" style="left:276px;top:502px;width:142px;height:21px;background:#d3ecdf;border-bottom:1px solid #c8d6cf;border-left:1px solid #c4c4c4"></div>
<div class="a" style="left:418px;top:502px;width:340px;height:21px;background:#fff;border-bottom:1px solid #dadada"></div>
<div class="a" style="left:418px;top:502px;width:1px;height:21px;background:#dadada"></div>
<div class="a" style="left:546px;top:502px;width:1px;height:21px;background:#dadada"></div>
<div class="a" style="left:704px;top:502px;width:1px;height:21px;background:#dadada"></div>
<div class="t" style="left:276px;top:507px;width:139px;text-align:right;font-size:11px;font-style:italic;color:#333">6</div>
<div class="t" style="left:418px;top:507px;width:125px;text-align:right;font-size:11px;font-style:italic;color:#333">61043323</div>
<div class="t" style="left:550px;top:507px;font-size:11px;color:#333">Ремаркетинг ИМК</div>
<div class="a" style="left:246px;top:523px;width:30px;height:21px;background:#ececec;border-bottom:1px solid #c4c4c4;border-left:1px solid #c4c4c4"></div>
<div class="t" style="left:246px;top:528px;width:30px;text-align:center;font-size:11.5px;color:#444">8</div>
<div class="a" style="left:276px;top:523px;width:142px;height:21px;background:#d3ecdf;border-bottom:1px solid #c8d6cf;border-left:1px solid #c4c4c4"></div>
<div class="a" style="left:418px;top:523px;width:340px;height:21px;background:#fff;border-bottom:1px solid #dadada"></div>
<div class="a" style="left:418px;top:523px;width:1px;height:21px;background:#dadada"></div>
<div class="a" style="left:546px;top:523px;width:1px;height:21px;background:#dadada"></div>
<div class="a" style="left:704px;top:523px;width:1px;height:21px;background:#dadada"></div>
<div class="t" style="left:276px;top:528px;width:139px;text-align:right;font-size:11px;font-style:italic;color:#333">4</div>
<div class="t" style="left:418px;top:528px;width:125px;text-align:right;font-size:11px;font-style:italic;color:#333">61043787</div>
<div class="t" style="left:550px;top:528px;font-size:11px;color:#333">Ремаркетинг СЦБ</div>
<div class="a" style="left:246px;top:544px;width:30px;height:21px;background:#ececec;border-bottom:1px solid #c4c4c4;border-left:1px solid #c4c4c4"></div>
<div class="t" style="left:246px;top:549px;width:30px;text-align:center;font-size:11.5px;color:#444">9</div>
<div class="a" style="left:276px;top:544px;width:142px;height:21px;background:#d3ecdf;border-bottom:1px solid #c8d6cf;border-left:1px solid #c4c4c4"></div>
<div class="a" style="left:418px;top:544px;width:340px;height:21px;background:#fff;border-bottom:1px solid #dadada"></div>
<div class="a" style="left:418px;top:544px;width:1px;height:21px;background:#dadada"></div>
<div class="a" style="left:546px;top:544px;width:1px;height:21px;background:#dadada"></div>
<div class="a" style="left:704px;top:544px;width:1px;height:21px;background:#dadada"></div>
<div class="t" style="left:276px;top:549px;width:139px;text-align:right;font-size:11px;font-style:italic;color:#333">6</div>
<div class="t" style="left:418px;top:549px;width:125px;text-align:right;font-size:11px;font-style:italic;color:#333">61043323</div>
<div class="t" style="left:550px;top:549px;font-size:11px;color:#333">Ремаркетинг ИМК</div>
<div class="a" style="left:246px;top:565px;width:30px;height:21px;background:#ececec;border-bottom:1px solid #c4c4c4;border-left:1px solid #c4c4c4"></div>
<div class="t" style="left:246px;top:570px;width:30px;text-align:center;font-size:11.5px;color:#444">10</div>
<div class="a" style="left:276px;top:565px;width:142px;height:21px;background:#d3ecdf;border-bottom:1px solid #c8d6cf;border-left:1px solid #c4c4c4"></div>
<div class="a" style="left:418px;top:565px;width:340px;height:21px;background:#fff;border-bottom:1px solid #dadada"></div>
<div class="a" style="left:418px;top:565px;width:1px;height:21px;background:#dadada"></div>
<div class="a" style="left:546px;top:565px;width:1px;height:21px;background:#dadada"></div>
<div class="a" style="left:704px;top:565px;width:1px;height:21px;background:#dadada"></div>
<div class="t" style="left:276px;top:570px;width:139px;text-align:right;font-size:11px;font-style:italic;color:#333">13</div>
<div class="t" style="left:418px;top:570px;width:125px;text-align:right;font-size:11px;font-style:italic;color:#333">61043787</div>
<div class="t" style="left:550px;top:570px;font-size:11px;color:#333">Ремаркетинг СЦБ</div>
<div class="a" style="left:246px;top:586px;width:30px;height:21px;background:#ececec;border-bottom:1px solid #c4c4c4;border-left:1px solid #c4c4c4"></div>
<div class="t" style="left:246px;top:591px;width:30px;text-align:center;font-size:11.5px;color:#444">11</div>
<div class="a" style="left:276px;top:586px;width:142px;height:21px;background:#d3ecdf;border-bottom:1px solid #c8d6cf;border-left:1px solid #c4c4c4"></div>
<div class="a" style="left:418px;top:586px;width:340px;height:21px;background:#fff;border-bottom:1px solid #dadada"></div>
<div class="a" style="left:418px;top:586px;width:1px;height:21px;background:#dadada"></div>
<div class="a" style="left:546px;top:586px;width:1px;height:21px;background:#dadada"></div>
<div class="a" style="left:704px;top:586px;width:1px;height:21px;background:#dadada"></div>
<div class="t" style="left:276px;top:591px;width:139px;text-align:right;font-size:11px;font-style:italic;color:#333">13</div>
<div class="t" style="left:418px;top:591px;width:125px;text-align:right;font-size:11px;font-style:italic;color:#333">61043323</div>
<div class="t" style="left:550px;top:591px;font-size:11px;color:#333">Ремаркетинг ИМК</div>
<div class="a" style="left:246px;top:607px;width:30px;height:21px;background:#ececec;border-bottom:1px solid #c4c4c4;border-left:1px solid #c4c4c4"></div>
<div class="t" style="left:246px;top:612px;width:30px;text-align:center;font-size:11.5px;color:#444">12</div>
<div class="a" style="left:276px;top:607px;width:142px;height:21px;background:#d3ecdf;border-bottom:1px solid #c8d6cf;border-left:1px solid #c4c4c4"></div>
<div class="a" style="left:418px;top:607px;width:340px;height:21px;background:#fff;border-bottom:1px solid #dadada"></div>
<div class="a" style="left:418px;top:607px;width:1px;height:21px;background:#dadada"></div>
<div class="a" style="left:546px;top:607px;width:1px;height:21px;background:#dadada"></div>
<div class="a" style="left:704px;top:607px;width:1px;height:21px;background:#dadada"></div>
<div class="t" style="left:276px;top:612px;width:139px;text-align:right;font-size:11px;font-style:italic;color:#333">5</div>
<div class="t" style="left:418px;top:612px;width:125px;text-align:right;font-size:11px;font-style:italic;color:#333">61043787</div>
<div class="t" style="left:550px;top:612px;font-size:11px;color:#333">Ремаркетинг СЦБ</div>
<div class="a" style="left:246px;top:628px;width:30px;height:21px;background:#ececec;border-bottom:1px solid #c4c4c4;border-left:1px solid #c4c4c4"></div>
<div class="t" style="left:246px;top:633px;width:30px;text-align:center;font-size:11.5px;color:#444">13</div>
<div class="a" style="left:276px;top:628px;width:142px;height:21px;background:#d3ecdf;border-bottom:1px solid #c8d6cf;border-left:1px solid #c4c4c4"></div>
<div class="a" style="left:418px;top:628px;width:340px;height:21px;background:#fff;border-bottom:1px solid #dadada"></div>
<div class="a" style="left:418px;top:628px;width:1px;height:21px;background:#dadada"></div>
<div class="a" style="left:546px;top:628px;width:1px;height:21px;background:#dadada"></div>
<div class="a" style="left:704px;top:628px;width:1px;height:21px;background:#dadada"></div>
<div class="t" style="left:276px;top:633px;width:139px;text-align:right;font-size:11px;font-style:italic;color:#333">0</div>
<div class="t" style="left:418px;top:633px;width:125px;text-align:right;font-size:11px;font-style:italic;color:#333">61043323</div>
<div class="t" style="left:550px;top:633px;font-size:11px;color:#333">Ремаркетинг ИМК</div>
<div class="a" style="left:246px;top:649px;width:30px;height:21px;background:#ececec;border-bottom:1px solid #c4c4c4;border-left:1px solid #c4c4c4"></div>
<div class="t" style="left:246px;top:654px;width:30px;text-align:center;font-size:11.5px;color:#444">14</div>
<div class="a" style="left:276px;top:649px;width:142px;height:21px;background:#d3ecdf;border-bottom:1px solid #c8d6cf;border-left:1px solid #c4c4c4"></div>
<div class="a" style="left:418px;top:649px;width:340px;height:21px;background:#fff;border-bottom:1px solid #dadada"></div>
<div class="a" style="left:418px;top:649px;width:1px;height:21px;background:#dadada"></div>
<div class="a" style="left:546px;top:649px;width:1px;height:21px;background:#dadada"></div>
<div class="a" style="left:704px;top:649px;width:1px;height:21px;background:#dadada"></div>
<div class="t" style="left:276px;top:654px;width:139px;text-align:right;font-size:11px;font-style:italic;color:#333">0</div>
<div class="t" style="left:418px;top:654px;width:125px;text-align:right;font-size:11px;font-style:italic;color:#333">61043787</div>
<div class="t" style="left:550px;top:654px;font-size:11px;color:#333">Ремаркетинг СЦБ</div>
<!-- h scrollbar -->
<div class="a" style="left:276px;top:711px;width:482px;height:17px;background:#f0f0f0"></div>
<svg style="left:293px;top:714px" width="8" height="11"><path d="M6.5 0.5l-5 5 5 5" fill="none" stroke="#555" stroke-width="2.4"/></svg>
<div class="a" style="left:310px;top:713px;width:174px;height:13px;background:#cdcdcd"></div>
<svg style="left:731px;top:714px" width="8" height="11"><path d="M1.5 0.5l5 5-5 5" fill="none" stroke="#555" stroke-width="2.4"/></svg>
<!-- right pane -->
<div class="a" style="left:762px;top:235px;width:1px;height:493px;background:#c8c8c8"></div>
<div class="t" style="left:777px;top:255px;font-size:20px;color:#66998a;letter-spacing:-0.7px;font-weight:300">Параметры запроса</div>
<svg style="left:990px;top:261px" width="12" height="12"><path d="M0.5 0.5l11 11M11.5 0.5l-11 11" stroke="#555" stroke-width="1.2"/></svg>
<svg style="left:774px;top:300px" width="7" height="7"><path d="M6 0v6h-6z" fill="#555"/></svg>
<div class="t" style="left:786px;top:298px;font-size:12px;font-weight:bold;color:#217346;letter-spacing:-0.3px">СВОЙСТВА</div>
<div class="t" style="left:786px;top:318px;font-size:12px;color:#444">Имя</div>
<div class="a" style="left:786px;top:333px;width:218px;height:22px;background:#fff;border:1px solid #b4b4b4"></div>
<div class="t" style="left:792px;top:339px;font-size:11.5px;letter-spacing:-0.25px;color:#333">Вызванная функция</div>
<div class="t" style="left:786px;top:366px;font-size:12px;letter-spacing:-0.3px;color:#2e5c9a">Все свойства</div>
<svg style="left:774px;top:401px" width="7" height="7"><path d="M6 0v6h-6z" fill="#555"/></svg>
<div class="t" style="left:786px;top:399px;font-size:12px;font-weight:bold;color:#217346;letter-spacing:-0.2px">ПРИМЕНЕННЫЕ ШАГИ</div>
<div class="a" style="left:786px;top:418px;width:218px;height:289px;background:#fff;border:1px solid #b4b4b4"></div>
<div class="a" style="left:787px;top:419px;width:216px;height:20px;background:#d3ecdf"></div>
<div class="t" style="left:807px;top:424px;font-size:12px;color:#333">Источник</div>
<svg style="left:983px;top:423px" width="12" height="12" viewBox="0 0 12 12"><circle cx="6" cy="6" r="3.2" fill="none" stroke="#b8b8b8" stroke-width="1.8"/><path d="M6 0.5v11M0.5 6h11M2 2l8 8M10 2l-8 8" stroke="#b8b8b8" stroke-width="1.4"/><circle cx="6" cy="6" r="1.2" fill="#d3ecdf"/></svg>
<!-- PQ status -->
<div class="a" style="left:62px;top:728px;width:966px;height:22px;background:#f2f1f0;border-top:1px solid #cfcfcf"></div>
<div class="t" style="left:67px;top:735px;font-size:10.5px;color:#444;letter-spacing:-0.1px">СТОЛБЦОВ: 8, СТРОК: 14</div>
<div class="t" style="left:761px;top:735px;font-size:10.5px;color:#444;letter-spacing:-0.25px">ПРЕДВАРИТЕЛЬНЫЙ ПРОСМОТР ЗАГРУЖЕН В 12:04</div>


<!-- Menu 1 -->
<div class="a" style="left:128px;top:341px;width:168px;height:131px;background:#fff;border:1px solid #c8c8c8;box-shadow:3px 3px 4px rgba(0,0,0,0.35)"></div>
<svg style="left:134px;top:346px" width="16" height="17" viewBox="0 0 16 17"><path d="M0 2h4v-1h1.5v-1h2v1h1.5v1h4v3h-5v11h-8z" fill="#d2d2d2"/><path d="M7.5 7.5h5l3 3v6h-8z" fill="#ececec" stroke="#c8c8c8" stroke-width="1"/></svg>
<div class="t" style="left:164px;top:348px;font-size:12px;color:#a6a6a6">Вставить</div>
<div class="a" style="left:161px;top:368px;width:133px;height:1px;background:#dde1e6"></div>
<div class="a" style="left:129px;top:371px;width:166px;height:22px;background:#e3e3e3"></div>
<div class="t" style="left:164px;top:376px;font-size:12px;color:#333">Новый запрос</div>
<svg style="left:280px;top:378px" width="5" height="8"><path d="M0 0v7.5l4-3.75z" fill="#666"/></svg>
<div class="a" style="left:161px;top:396px;width:133px;height:1px;background:#dde1e6"></div>
<div class="t" style="left:164px;top:404px;font-size:12px;color:#333">Создать группу...</div>
<div class="a" style="left:161px;top:424px;width:133px;height:1px;background:#dde1e6"></div>
<div class="t" style="left:164px;top:432px;font-size:12px;color:#a6a6a6">Развернуть все</div>
<div class="t" style="left:164px;top:454px;font-size:12px;color:#a6a6a6">Свернуть все</div>
<!-- Menu 2 -->
<div class="a" style="left:296px;top:371px;width:197px;height:125px;background:#fff;border:1px solid #c8c8c8;box-shadow:3px 3px 4px rgba(0,0,0,0.35)"></div>
<svg style="left:302px;top:377px" width="12" height="15" viewBox="0 0 12 15"><path d="M0.5 0.5h7l4 4v10h-11z" fill="#fff" stroke="#555" stroke-width="1"/><path d="M7.5 0.5v4h4" fill="none" stroke="#555" stroke-width="1"/></svg>
<div class="t" style="left:331px;top:378px;font-size:12px;color:#333">Файл</div>
<svg style="left:477px;top:380px" width="5" height="8"><path d="M0 0v7.5l4-3.75z" fill="#666"/></svg>
<svg style="left:302px;top:398px" width="11" height="16" viewBox="0 0 11 16"><path d="M0.5 2.5v11q0 2 5 2t5-2v-11z" fill="#e8b865"/><ellipse cx="5.5" cy="2.5" rx="5" ry="2" fill="#f2d39a"/></svg>
<div class="t" style="left:331px;top:400px;font-size:12px;color:#333">База данных</div>
<svg style="left:477px;top:402px" width="5" height="8"><path d="M0 0v7.5l4-3.75z" fill="#666"/></svg>
<div class="a" style="left:297px;top:417px;width:195px;height:22px;background:#e3e3e3"></div>
<svg style="left:300px;top:420px" width="16" height="16" viewBox="0 0 16 16"><circle cx="8" cy="8" r="4.5" fill="none" stroke="#2f6db3" stroke-width="2"/><rect x="6.2" y="0.5" width="3.6" height="3.2" fill="#2f6db3"/><rect x="6.2" y="12.3" width="3.6" height="3.2" fill="#2f6db3"/><rect x="0.5" y="6.2" width="3.2" height="3.6" fill="#2f6db3"/><rect x="12.3" y="6.2" width="3.2" height="3.6" fill="#2f6db3"/></svg>
<div class="t" style="left:331px;top:422px;font-size:12px;color:#333">Другие источники</div>
<svg style="left:477px;top:424px" width="5" height="8"><path d="M0 0v7.5l4-3.75z" fill="#666"/></svg>
<div class="a" style="left:328px;top:442px;width:163px;height:1px;background:#dde1e6"></div>
<div class="t" style="left:331px;top:450px;font-size:12px;color:#333">Объединить</div>
<svg style="left:477px;top:452px" width="5" height="8"><path d="M0 0v7.5l4-3.75z" fill="#666"/></svg>
<div class="a" style="left:328px;top:470px;width:163px;height:1px;background:#dde1e6"></div>
<svg style="left:302px;top:476px" width="18" height="19" viewBox="0 0 18 19"><path d="M0.5 0.5h7l4 4v9h-11z" fill="#fff" stroke="#555" stroke-width="1"/><path d="M7.5 0.5v4h4" fill="none" stroke="#555" stroke-width="1"/><circle cx="11.5" cy="13" r="5" fill="#fff" stroke="#3a78bd" stroke-width="1.2"/><path d="M11.5 10v3.3h2.5" fill="none" stroke="#3a78bd" stroke-width="1.1"/></svg>
<div class="t" style="left:331px;top:478px;font-size:12px;color:#333">Последние источники</div>
<svg style="left:477px;top:480px" width="5" height="8"><path d="M0 0v7.5l4-3.75z" fill="#666"/></svg>
<!-- Menu 3 -->
<div class="a" style="left:493px;top:417px;width:155px;height:113px;background:#fff;border:1px solid #c8c8c8;box-shadow:3px 3px 4px rgba(0,0,0,0.35)"></div>
<svg style="left:497px;top:422px" width="16" height="16" viewBox="0 0 16 16"><circle cx="8" cy="8" r="7.2" fill="none" stroke="#3d78bd" stroke-width="1.2"/><ellipse cx="8" cy="8" rx="3" ry="7.2" fill="none" stroke="#3d78bd" stroke-width="1.1"/><path d="M1 5.5h14M0.8 10.5h14.4M8 0.8v14.4" stroke="#3d78bd" stroke-width="1.1"/></svg>
<div class="t" style="left:528px;top:424px;font-size:12px;color:#333">Интернет</div>
<svg style="left:497px;top:444px" width="16" height="16" viewBox="0 0 16 16"><rect x="0" y="0" width="16" height="16" fill="#f5840c"/><path d="M2 3h4M2 6h4M2 9h4M9 3h5M9 6h5M9 9h5M9 12h5" stroke="#fff" stroke-width="1.5"/><circle cx="4.5" cy="12" r="2.6" fill="#fff"/></svg>
<div class="t" style="left:528px;top:446px;font-size:12px;color:#333">Канал OData</div>
<svg style="left:497px;top:466px" width="16" height="16" viewBox="0 0 16 16"><circle cx="8" cy="8" r="4.5" fill="none" stroke="#3a73b8" stroke-width="2"/><rect x="6.2" y="0.5" width="3.6" height="3.2" fill="#3a73b8"/><rect x="6.2" y="12.3" width="3.6" height="3.2" fill="#3a73b8"/><rect x="0.5" y="6.2" width="3.2" height="3.6" fill="#3a73b8"/><rect x="12.3" y="6.2" width="3.2" height="3.6" fill="#3a73b8"/></svg>
<div class="t" style="left:528px;top:468px;font-size:12px;color:#333">ODBC</div>
<svg style="left:497px;top:488px" width="16" height="16" viewBox="0 0 16 16"><circle cx="8" cy="8" r="4.5" fill="none" stroke="#3a73b8" stroke-width="2"/><rect x="6.2" y="0.5" width="3.6" height="3.2" fill="#3a73b8"/><rect x="6.2" y="12.3" width="3.6" height="3.2" fill="#3a73b8"/><rect x="0.5" y="6.2" width="3.2" height="3.6" fill="#3a73b8"/><rect x="12.3" y="6.2" width="3.2" height="3.6" fill="#3a73b8"/></svg>
<div class="t" style="left:528px;top:490px;font-size:12px;color:#333">OLE DB</div>
<div class="a" style="left:494px;top:507px;width:153px;height:22px;background:#e3e3e3;box-shadow:inset 0 4px 4px -2px rgba(0,0,0,0.3)"></div>
<svg style="left:497px;top:511px" width="17" height="15" viewBox="0 0 17 15"><path d="M3.5 0.5h10.5q1.5 0 1.5 1.5v1h-2v8.5h-10z" fill="#fff" stroke="#666" stroke-width="1"/><path d="M6 3.5h5.5M6 5.5h5.5M6 7.5h5.5" stroke="#888" stroke-width="0.9"/><path d="M0.5 12.5q0-2.5 2.5-2.5h8.5v4.5h-8.5q-2.5 0-2.5-2z" fill="#666"/></svg>
<div class="t" style="left:528px;top:513px;font-size:12px;color:#555">Пустой запрос</div>


<svg style="left:0;top:0" width="1214" height="801" viewBox="0 0 1214 801">
<defs>
<filter id="sh" x="-20%" y="-20%" width="140%" height="140%"><feDropShadow dx="1" dy="2" stdDeviation="1.5" flood-color="#000" flood-opacity="0.35"/></filter>
</defs>
<ellipse cx="150.5" cy="593.3" rx="68.5" ry="97.5" fill="none" stroke="#f5434a" stroke-width="3" filter="url(#sh)"/>
<circle cx="136" cy="567.5" r="20" fill="#fa4449" filter="url(#sh)"/>
<path d="M136.6 558.2h2.9v20.8h-3v-16.5q-2.2 2-5.7 3.3v-2.9q3.9-1.7 5.8-4.7z" fill="#fff"/>
<rect x="491.5" y="506.5" width="159.5" height="22.5" fill="none" stroke="#f83b40" stroke-width="3.2" filter="url(#sh)"/>
<circle cx="476" cy="524" r="20" fill="#fa4449" filter="url(#sh)"/>
<text x="476" y="535" text-anchor="middle" style="font-family:'Liberation Sans'" font-size="30" fill="#fff">2</text>
<path d="M555.5 521.5v16.5l3.8-3.6 2.6 5.8 2.5-1.1-2.5-5.7h5.4z" fill="#fff" stroke="#000" stroke-width="1"/>
</svg>

</body></html>
